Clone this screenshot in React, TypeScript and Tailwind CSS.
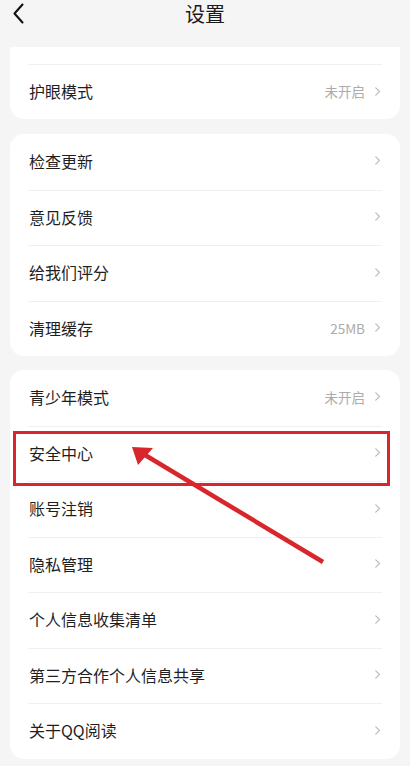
import React from 'react';

type Item = { label: string; value?: string };

const FONT = { fontFamily: '"Noto Sans CJK SC", "Noto Sans", sans-serif' };

const Chevron = () => (
  <svg width="7" height="11" viewBox="0 0 7 11" fill="none">
    <path d="M1.8 1.8l3.6 3.7-3.6 3.7" stroke="#bdbdbd" strokeWidth="1.2" strokeLinecap="round" strokeLinejoin="round" />
  </svg>
);

const Row = ({ item, first }: { item: Item; first?: boolean }) => (
  <div className="px-[18px]">
    <div className={`h-[55.5px] flex items-center justify-between pl-px pr-[1px] pb-[2px] ${first ? '' : 'border-t border-[#f0f0f0]'}`}>
      <span className="text-[16px] text-[#1f1f1f]">{item.label}</span>
      <div className="flex items-center gap-[9px]">
        {item.value && <span className="text-[13.5px] text-[#ababab]">{item.value}</span>}
        <Chevron />
      </div>
    </div>
  </div>
);

const Card = ({ items }: { items: Item[] }) => (
  <div className="mx-[10px] bg-white rounded-[14px]">
    {items.map((it, i) => (
      <Row key={it.label} item={it} first={i === 0} />
    ))}
  </div>
);

const App: React.FC = () => {
  const group2: Item[] = [
    { label: '检查更新' },
    { label: '意见反馈' },
    { label: '给我们评分' },
    { label: '清理缓存', value: '25MB' },
  ];
  const group3: Item[] = [
    { label: '青少年模式', value: '未开启' },
    { label: '安全中心' },
    { label: '账号注销' },
    { label: '隐私管理' },
    { label: '个人信息收集清单' },
    { label: '第三方合作个人信息共享' },
    { label: '关于QQ阅读' },
  ];

  return (
    <div className="relative w-[410px] h-[766px] overflow-hidden bg-[#f5f5f5]" style={FONT}>
      {/* Header */}
      <div className="relative h-[29px] flex items-center justify-center pb-[2px]">
        <svg className="absolute left-[12px] top-[3px]" width="14" height="22" viewBox="0 0 14 22" fill="none">
          <path d="M10.5 1.5L2.5 10.5l8 9" stroke="#111" strokeWidth="2.1" strokeLinecap="round" strokeLinejoin="round" />
        </svg>
        <span className="text-[20px] text-[#1a1a1a]">设置</span>
      </div>

      {/* Card (scrolled, top cut) */}
      <div className="mt-[18px] mx-[10px] bg-white rounded-b-[14px]">
        <div className="h-[17px]" />
        <div className="px-[18px]">
          <div className="h-[55px] flex items-center justify-between pl-px pr-[1px] pb-[2px] border-t border-[#f0f0f0]">
            <span className="text-[16px] text-[#1f1f1f]">护眼模式</span>
            <div className="flex items-center gap-[9px]">
              <span className="text-[13.5px] text-[#ababab]">未开启</span>
              <Chevron />
            </div>
          </div>
        </div>
      </div>

      <div className="mt-[15px]">
        <Card items={group2} />
      </div>
      <div className="mt-[14px]">
        <Card items={group3} />
      </div>

      {/* Annotation */}
      <div className="absolute left-[13px] top-[431px] w-[377px] h-[55px] border-[3px] border-[#d9262c]" />
      <svg className="absolute left-0 top-0 pointer-events-none" width="410" height="766" viewBox="0 0 410 766">
        <line x1="323" y1="562" x2="145" y2="455" stroke="#d9262c" strokeWidth="4.5" />
        <polygon points="132,447 153,448 138,465" fill="#d9262c" />
      </svg>
    </div>
  );
};

export default App;
